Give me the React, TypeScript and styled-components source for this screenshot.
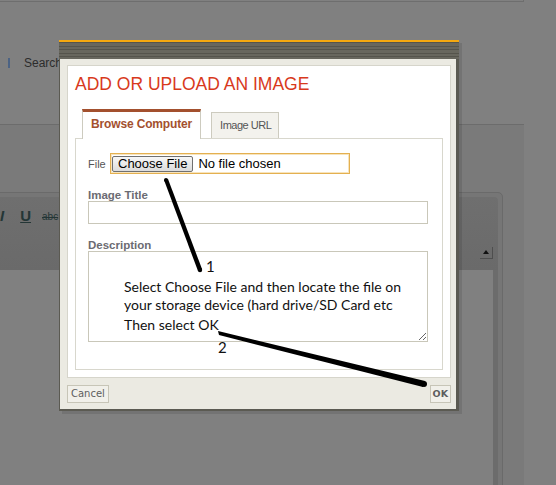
import React from "react"
import styled, { createGlobalStyle } from "styled-components"

const GlobalStyle = createGlobalStyle`
  html, body {
    margin: 0;
    padding: 0;
    background: #808080;
    font-family: "Liberation Sans", Arial, sans-serif;
  }
`

/* ---------- dimmed page behind the dialog ---------- */

const Page = styled.div`
  position: relative;
  width: 556px;
  height: 485px;
  overflow: hidden;
  display: flex;
  flex-direction: column;
  background: #808080;
`

const TopBar = styled.div`
  flex-shrink: 0;
  width: 523px;
  height: 1px;
  border-bottom: 1px solid #6e6e6e;
  border-right: 1px solid #6e6e6e;
`

const NavRow = styled.div`
  flex-shrink: 0;
  height: 122px;
  display: flex;
  align-items: center;
  padding-left: 8px;
  font-size: 12px;
`

const NavSep = styled.span`
  width: 2px;
  height: 10px;
  background: #4c6384;
  margin-right: 14px;
`

const NavLink = styled.span`
  color: #2c2c2c;
`

const Section = styled.div`
  flex: 1;
  min-height: 0;
  overflow: hidden;
  width: 524px;
  border-top: 1px solid #6c6c6c;
  background: #7a7a7a;
  padding-top: 67px;
`

const Editor = styled.div`
  margin-left: -10px;
  width: 513px;
  height: 320px;
  border: 1px solid #6a6a6a;
  border-radius: 5px 5px 0 0;
  background: #767676;
  padding: 4px 4px 0 4px;
  box-sizing: border-box;
  display: grid;
  grid-template-columns: 1fr 5px;
  grid-template-rows: 73px 1fr;
`

const EditorChrome = styled.div`
  grid-column: 1 / 3;
  display: flex;
  flex-direction: column;
  background: linear-gradient(#6f6f6f, #6a6a6a);
  border-radius: 4px 4px 0 0;
`

const ToolRow = styled.div`
  height: 38px;
  display: flex;
  align-items: center;
  padding-left: 5px;
  color: #243636;
`

const ToolIcon = styled.span<{ $ml: number }>`
  margin-left: ${p => p.$ml}px;
  font-family: "Liberation Sans", Arial, sans-serif;
  font-weight: bold;
  font-size: 15px;
  line-height: 16px;
`

const ToolSmall = styled.span<{ $ml: number }>`
  margin-left: ${p => p.$ml}px;
  font-size: 10px;
  text-decoration: line-through;
`

const SubRow = styled.div`
  flex: 1;
  display: flex;
  justify-content: flex-end;
  align-items: center;
  padding-right: 5px;
`

const ScrollButton = styled.span`
  width: 13px;
  height: 12px;
  box-sizing: border-box;
  border-right: 1px solid #4e4e4e;
  border-bottom: 1px solid #4e4e4e;
  display: flex;
  align-items: center;
  justify-content: center;

  &::before {
    content: "";
    border-left: 3px solid transparent;
    border-right: 3px solid transparent;
    border-bottom: 4px solid #111;
  }
`

const EditorBody = styled.div`
  background: #808080;
`

const EditorTrack = styled.div`
  background: #6c6c6c;
`

/* ---------- dialog ---------- */

const Modal = styled.div`
  position: absolute;
  left: 59px;
  top: 40px;
  width: 400px;
  background: #5b5a52;
  border-top: 2px solid #f5a80f;
  box-shadow: 3px 3px 0 rgba(0, 0, 0, 0.1);
  padding: 0 3px 2px 1px;
  box-sizing: border-box;
`

const ModalHeader = styled.div`
  height: 17px;
  margin: 0 -3px 0 -1px;
  background: repeating-linear-gradient(
    to bottom,
    #55544c 0px,
    #55544c 1px,
    #68675e 1px,
    #68675e 3.5px
  );
`

const ModalBody = styled.div`
  background: #ebeae2;
  padding: 6px 5px 6px 7px;
`

const Sheet = styled.div`
  background: #fff;
  border: 1px solid #d6d5cb;
  padding: 0 7px 7px 7px;
`

const Title = styled.h1`
  margin: 8px 0 15px 0;
  font-size: 17.5px;
  line-height: 20px;
  font-weight: normal;
  color: #d8391c;
`

const Tabs = styled.div`
  display: flex;
  align-items: flex-end;
  gap: 10px;
  padding-left: 7px;
`

const Tab = styled.div<{ $active?: boolean }>`
  position: relative;
  z-index: 1;
  box-sizing: border-box;
  border: 1px solid #cdcbbf;
  border-bottom: none;
  ${p =>
    p.$active
      ? `
    height: 30px;
    margin-bottom: -1px;
    border-top: 3px solid #a3502e;
    background: #fff;
    padding: 0 8px 3px 8px;
    font-size: 12px;
    letter-spacing: -0.15px;
    font-weight: bold;
    line-height: 24px;
    color: #a3502e;
  `
      : `
    height: 26px;
    background: #f3f2ed;
    padding: 0 7px 0 8px;
    font-size: 11px;
    letter-spacing: -0.5px;
    line-height: 25px;
    color: #555;
  `}
`

const Panel = styled.div`
  border: 1px solid #d8d7cd;
  padding: 14px 14px 27px 12px;
`

const FileRow = styled.div`
  display: flex;
  align-items: center;
`

const FileLabel = styled.span`
  width: 22px;
  font-size: 11px;
  color: #555;
`

const FileBox = styled.div`
  width: 240px;
  height: 21px;
  box-sizing: border-box;
  border: 1px solid #e4b050;
  box-shadow: inset 0 0 0 1px #f7e4bd;
  display: flex;
  align-items: center;
  padding-left: 1px;
  font-size: 13px;
  color: #000;
`

const ChooseButton = styled.span`
  height: 16px;
  box-sizing: border-box;
  padding: 0 5px;
  border: 1px solid #707070;
  border-radius: 2px;
  background: linear-gradient(#f7f7f7, #dcdcdc);
  line-height: 14px;
  font-size: 13px;
`

const NoFile = styled.span`
  margin-left: 5px;
`

const FieldLabel = styled.div<{ $gap: number }>`
  margin-top: ${p => p.$gap}px;
  font-size: 11.5px;
  font-weight: bold;
  line-height: 12px;
  color: #6b6b72;
`

const TextInput = styled.input`
  display: block;
  width: 340px;
  height: 23px;
  box-sizing: border-box;
  margin: 0;
  border: 1px solid #c9c7b9;
  outline: none;
`

const TextArea = styled.textarea`
  display: block;
  width: 340px;
  height: 91px;
  box-sizing: border-box;
  margin: 0;
  border: 1px solid #c9c7b9;
  outline: none;
  resize: both;
`

const Footer = styled.div`
  display: flex;
  justify-content: space-between;
  margin-top: 7px;
`

const FooterButton = styled.span<{ $bold?: boolean }>`
  height: 18px;
  box-sizing: border-box;
  border: 1px solid #c7c5b7;
  background: #f1f0ea;
  padding: 0 ${p => (p.$bold ? 2 : 3)}px;
  font-family: "DejaVu Sans", Verdana, sans-serif;
  font-size: ${p => (p.$bold ? 9.5 : 10)}px;
  font-weight: ${p => (p.$bold ? "bold" : "normal")};
  line-height: 16px;
  color: #5e5e5e;
`

/* ---------- hand-drawn annotations ---------- */

const Marks = styled.svg`
  position: absolute;
  left: 0;
  top: 0;
  pointer-events: none;
`

const Note = styled.div`
  position: absolute;
  left: 124px;
  top: 278px;
  font-family: Lato, "Open Sans", sans-serif;
  font-size: 14px;
  line-height: 18px;
  color: #111;
`

const NoteLine = styled.div<{ $pad?: number }>`
  padding-top: ${p => p.$pad || 0}px;
  white-space: nowrap;
`

const Num = styled.span<{ $x: number; $y: number }>`
  position: absolute;
  left: ${p => p.$x}px;
  top: ${p => p.$y}px;
  font-family: Lato, "Open Sans", sans-serif;
  font-size: 15px;
  line-height: 18px;
  color: #111;
`

export default function App() {
  return (
    <Page>
      <GlobalStyle />
      <TopBar />
      <NavRow>
        <NavSep />
        <NavLink>Search</NavLink>
      </NavRow>
      <Section>
        <Editor>
          <EditorChrome>
            <ToolRow>
              <ToolIcon $ml={0} as="i">I</ToolIcon>
              <ToolIcon $ml={16} style={{ textDecoration: "underline" }}>U</ToolIcon>
              <ToolSmall $ml={11}>abc</ToolSmall>
            </ToolRow>
            <SubRow>
              <ScrollButton />
            </SubRow>
          </EditorChrome>
          <EditorBody />
          <EditorTrack />
        </Editor>
      </Section>

      <Modal>
        <ModalHeader />
        <ModalBody>
          <Sheet>
            <Title>ADD OR UPLOAD AN IMAGE</Title>
            <Tabs>
              <Tab $active>Browse Computer</Tab>
              <Tab>Image URL</Tab>
            </Tabs>
            <Panel>
              <FileRow>
                <FileLabel>File</FileLabel>
                <FileBox>
                  <ChooseButton>Choose File</ChooseButton>
                  <NoFile>No file chosen</NoFile>
                </FileBox>
              </FileRow>
              <FieldLabel $gap={15}>Image Title</FieldLabel>
              <TextInput type="text" />
              <FieldLabel $gap={15}>Description</FieldLabel>
              <TextArea />
            </Panel>
          </Sheet>
          <Footer>
            <FooterButton>Cancel</FooterButton>
            <FooterButton $bold>OK</FooterButton>
          </Footer>
        </ModalBody>
      </Modal>

      <Marks width="556" height="485" viewBox="0 0 556 485">
        <polygon points="164,180 168,179 202,269 198,271" fill="#000" />
        <circle cx="200" cy="270" r="2.2" fill="#000" />
        <circle cx="166" cy="180" r="2" fill="#000" />
        <polygon points="218,331 219,335 423,387 425,381" fill="#000" />
        <circle cx="424" cy="384" r="3" fill="#000" />
      </Marks>
      <Num $x={206} $y={257}>1</Num>
      <Num $x={218} $y={338}>2</Num>
      <Note>
        <NoteLine>Select Choose File and then locate the file on</NoteLine>
        <NoteLine>your storage device (hard drive/SD Card etc</NoteLine>
        <NoteLine $pad={2}>Then select OK</NoteLine>
      </Note>
    </Page>
  )
}
